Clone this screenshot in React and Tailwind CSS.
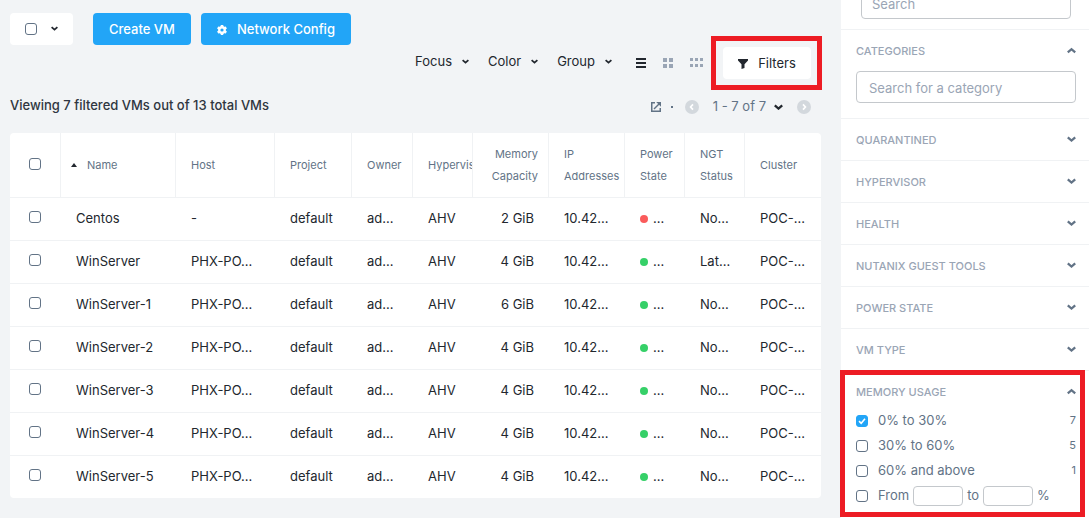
import { useState } from 'react';

const columns = [
  { label: 'Host', width: 'w-[99px]' },
  { label: 'Project', width: 'w-[77px]' },
  { label: 'Owner', width: 'w-[61px]' },
  { label: 'Hypervisor', width: 'w-[60px]' },
  { label: 'Memory Capacity', width: 'w-[76px]', right: true },
  { label: 'IP Addresses', width: 'w-[76px]' },
  { label: 'Power State', width: 'w-[60px]' },
  { label: 'NGT Status', width: 'w-[60px]' },
  { label: 'Cluster', width: 'w-[76px]' },
];

const vms = [
  { name: 'Centos', host: '-', memory: '2 GiB', on: false, ngt: 'No...' },
  { name: 'WinServer', host: 'PHX-PO...', memory: '4 GiB', on: true, ngt: 'Lat...' },
  { name: 'WinServer-1', host: 'PHX-PO...', memory: '6 GiB', on: true, ngt: 'No...' },
  { name: 'WinServer-2', host: 'PHX-PO...', memory: '4 GiB', on: true, ngt: 'No...' },
  { name: 'WinServer-3', host: 'PHX-PO...', memory: '4 GiB', on: true, ngt: 'No...' },
  { name: 'WinServer-4', host: 'PHX-PO...', memory: '4 GiB', on: true, ngt: 'No...' },
  { name: 'WinServer-5', host: 'PHX-PO...', memory: '4 GiB', on: true, ngt: 'No...' },
];

const collapsed = ['Quarantined', 'Hypervisor', 'Health', 'Nutanix Guest Tools', 'Power State', 'VM Type'];

const ranges = [
  { label: '0% to 30%', count: 7 },
  { label: '30% to 60%', count: 5 },
  { label: '60% and above', count: 1 },
];

function Chevron({ up = false, className = 'w-2' }) {
  return (
    <svg viewBox="0 0 8 6" className={`shrink-0 ${className}`} fill="none" stroke="currentColor" strokeWidth="2" aria-hidden="true">
      <path d={up ? 'M0.7 4.8 4 1.9 7.3 4.8' : 'M0.7 1.2 4 4.1 7.3 1.2'} />
    </svg>
  );
}

function Check({ label, id, defaultChecked = false }) {
  return (
    <span className="relative inline-flex size-3 shrink-0">
      <input
        type="checkbox"
        id={id}
        aria-label={label}
        defaultChecked={defaultChecked}
        className="peer size-3 appearance-none rounded-[3px] border border-[#627386] bg-white checked:border-[#22a5f7] checked:bg-[#22a5f7]"
      />
      <svg viewBox="0 0 12 12" className="pointer-events-none absolute inset-0 hidden size-3 peer-checked:block" fill="none" stroke="white" strokeWidth="1.6" aria-hidden="true">
        <path d="M3 6.2 5.2 8.3 9 3.8" />
      </svg>
    </span>
  );
}

function GearIcon() {
  return (
    <svg viewBox="0 0 10 10" className="size-2.5" aria-hidden="true">
      <g fill="currentColor">
        <rect x="3.7" y="0" width="2.6" height="10" rx="0.4" />
        <rect x="3.7" y="0" width="2.6" height="10" rx="0.4" transform="rotate(60 5 5)" />
        <rect x="3.7" y="0" width="2.6" height="10" rx="0.4" transform="rotate(120 5 5)" />
      </g>
      <circle cx="5" cy="5" r="2.8" fill="none" stroke="currentColor" strokeWidth="2.2" />
      <circle cx="5" cy="5" r="1.6" fill="#22a5f7" />
    </svg>
  );
}

function PageArrow({ next = false }) {
  return (
    <button type="button" aria-label={next ? 'Next page' : 'Previous page'} className="size-3.5 rounded-full bg-[#d3d8dd]">
      <svg viewBox="0 0 14 14" className="size-3.5" fill="none" stroke="white" strokeWidth="1.7" aria-hidden="true">
        <path d={next ? 'M6 4.4 8.4 7 6 9.6' : 'M8 4.4 5.6 7 8 9.6'} />
      </svg>
    </button>
  );
}

function Toolbar() {
  return (
    <>
      <div className="flex h-8 items-center gap-2.5">
        <div className="mr-2.5 flex h-8 w-[63px] items-center justify-between rounded bg-white px-[15px]">
          <Check label="Select all VMs" />
          <button type="button" aria-label="Selection options" className="text-[#22272e]">
            <Chevron className="w-[7px]" />
          </button>
        </div>
        <button type="button" className="h-8 rounded bg-[#22a5f7] px-4 pt-0.5 text-[13px] font-medium text-white">Create VM</button>
        <button type="button" className="flex h-8 items-center gap-2.5 rounded bg-[#22a5f7] px-4 pt-0.5 text-[13px] font-medium text-white">
          <GearIcon />
          Network Config
        </button>
      </div>
      <div className="mt-0.5 flex h-8 items-center justify-end">
        <div className="flex items-center gap-[19px] pb-0.5 text-[13px]">
          {['Focus', 'Color', 'Group'].map((name) => (
            <button key={name} type="button" className="flex items-center gap-2.5">
              {name}
              <Chevron className="w-[7px]" />
            </button>
          ))}
        </div>
        <div className="ml-6 flex items-center gap-[17px] text-[#9aa5b5]">
          <button type="button" aria-label="List view" className="text-[#22272e]">
            <svg viewBox="0 0 10 10" className="size-2.5" fill="currentColor" aria-hidden="true">
              <path d="M0 0h10v2H0zM0 4h10v2H0zM0 8h10v2H0z" />
            </svg>
          </button>
          <button type="button" aria-label="Grid view">
            <svg viewBox="0 0 10 10" className="size-2.5" fill="currentColor" aria-hidden="true">
              <path d="M0 0h4v4H0zM6 0h4v4H6zM0 6h4v4H0zM6 6h4v4H6z" />
            </svg>
          </button>
          <button type="button" aria-label="Tile view">
            <svg viewBox="0 0 13 10" className="h-2.5 w-[13px]" fill="currentColor" aria-hidden="true">
              <path d="M0 0h3v3H0zM5 0h3v3H5zM10 0h3v3h-3zM0 6h3v3H0zM5 6h3v3H5zM10 6h3v3h-3z" />
            </svg>
          </button>
        </div>
        <div className="relative mr-2.5 ml-5">
          <button type="button" className="flex h-8 w-[88px] items-center justify-center gap-2.5 rounded bg-white pt-0.5 text-[13px]">
            <svg viewBox="0 0 10 10" className="size-2.5" fill="currentColor" aria-hidden="true">
              <path d="M0 0h10v1.5L6.5 5.2V9L3.5 10V5.2L0 1.5z" />
            </svg>
            Filters
          </button>
          <div className="pointer-events-none absolute -inset-y-[11px] -right-[11px] -left-3 border-5 border-[#ed1c24]" />
        </div>
      </div>
      <div className="flex h-[54px] items-center justify-between">
        <h1 className="text-[13px] font-medium text-[#2f3640]">Viewing 7 filtered VMs out of 13 total VMs</h1>
        <div className="mr-2.5 flex items-center pt-0.5 text-[13px] text-[#627386]">
          <button type="button" aria-label="Export">
            <svg viewBox="0 0 10 10" className="size-2.5" fill="none" stroke="currentColor" strokeWidth="1.5" aria-hidden="true">
              <path d="M4 .75H.75v8.5h8.5V6" />
              <path d="M3 7 8 2" />
              <path d="M5.2 0H10v4.8z" fill="currentColor" stroke="none" />
            </svg>
          </button>
          <span className="ml-2.5 size-0.5 bg-[#627386]" />
          <span className="ml-3 flex"><PageArrow /></span>
          <button type="button" className="mx-3.5 flex items-center gap-2">
            1 - 7 of 7
            <Chevron className="w-[9px] text-[#22272e]" />
          </button>
          <span className="flex"><PageArrow next /></span>
        </div>
      </div>
    </>
  );
}

function VmTable() {
  const line = 'border-[#f0f2f4]';
  return (
    <table className="w-full table-fixed border-separate border-spacing-0 overflow-hidden rounded bg-white text-left">
      <thead className="text-[11px] leading-[22px] text-[#627386]">
        <tr className="h-[65px]">
          <th className={`w-[51px] border-r border-b pb-0.5 pl-[19px] font-normal ${line}`}>
            <span className="flex"><Check label="Select all rows" /></span>
          </th>
          <th className={`w-[115px] border-r border-b pl-2.5 font-normal ${line}`}>
            <span className="flex items-center gap-2.5">
              <svg viewBox="0 0 6 4" className="w-1.5 text-[#22272e]" fill="currentColor" aria-hidden="true">
                <path d="M3 0 6 4H0z" />
              </svg>
              Name
            </span>
          </th>
          {columns.map((c) => (
            <th
              key={c.label}
              className={`overflow-hidden border-r border-b font-normal last:border-r-0 ${line} ${c.width} ${c.right ? 'pr-2.5 text-right' : 'pl-[15px]'}`}
            >
              {c.label}
            </th>
          ))}
        </tr>
      </thead>
      <tbody className="text-[13px] whitespace-nowrap *:*:border-b *:*:border-[#f0f2f4] last:*:last:*:border-b-0">
        {vms.map((vm) => (
          <tr key={vm.name} className="h-[43px] last:h-[42px]">
            <td className="pb-1 pl-[19px]">
              <span className="flex"><Check label={`Select ${vm.name}`} /></span>
            </td>
            <td className="pl-[15px]">{vm.name}</td>
            <td className="pl-[15px]">{vm.host}</td>
            <td className="pl-[15px]">default</td>
            <td className="pl-[15px]">ad...</td>
            <td className="pl-[15px]">AHV</td>
            <td className="pr-[15px] text-right">{vm.memory}</td>
            <td className="pl-[15px]">10.42...</td>
            <td className="pl-[15px]">
              <span className="flex items-center gap-[5px]">
                <span className={`size-2 rounded-full ${vm.on ? 'bg-[#36d068]' : 'bg-[#fa5b5b]'}`} />
                ...
              </span>
            </td>
            <td className="pl-[15px]">{vm.ngt}</td>
            <td className="pl-[15px]">POC-...</td>
          </tr>
        ))}
      </tbody>
    </table>
  );
}

function SectionHeader({ title, open, onClick }) {
  return (
    <button type="button" aria-expanded={open} onClick={onClick} className="flex h-[41px] w-full items-center justify-between text-[11px] font-medium text-[#9aa5b5] uppercase">
      <span className="pt-0.5">{title}</span>
      <Chevron up={open} className="w-[9px] text-[#627386]" />
    </button>
  );
}

function FilterPanel() {
  const [categoriesOpen, setCategoriesOpen] = useState(true);
  const [memoryOpen, setMemoryOpen] = useState(true);
  return (
    <aside className="w-[248px] shrink-0 bg-white text-[13px] text-[#627386]">
      <div className="border-b border-[#f0f2f4] pr-[18px] pb-2.5 pl-5">
        <input type="text" aria-label="Search labels" placeholder="Search" className="-mt-[13px] block h-8 w-full rounded border border-[#c4c8cc] px-2.5 pt-0.5 placeholder:text-[#9aa5b5]" />
      </div>
      <section className="border-b border-[#f0f2f4] pr-[13px] pl-[15px]">
        <SectionHeader title="Categories" open={categoriesOpen} onClick={() => setCategoriesOpen(!categoriesOpen)} />
        {categoriesOpen && (
          <div className="pb-[15px]">
            <input type="text" aria-label="Search for a category" placeholder="Search for a category" className="block h-8 w-full rounded border border-[#c4c8cc] px-3 pt-0.5 placeholder:text-[#9aa5b5]" />
          </div>
        )}
      </section>
      {collapsed.map((title) => (
        <section key={title} className="border-b border-[#f0f2f4] pr-[13px] pl-[15px]">
          <SectionHeader title={title} open={false} />
        </section>
      ))}
      <section className="relative pr-[13px] pb-[9px] pl-[15px]">
        <SectionHeader title="Memory Usage" open={memoryOpen} onClick={() => setMemoryOpen(!memoryOpen)} />
        {memoryOpen && (
          <ul className="-mt-1">
            {ranges.map((r, i) => (
              <li key={r.label} className="flex h-[25px] items-center gap-2.5">
                <Check id={`memory-${i}`} label={r.label} defaultChecked={i === 0} />
                <label htmlFor={`memory-${i}`}>{r.label}</label>
                <span className="ml-auto text-[11px]">{r.count}</span>
              </li>
            ))}
            <li className="flex h-[25px] items-center">
              <Check id="memory-custom" label="Custom range" />
              <label htmlFor="memory-custom" className="ml-2.5">From</label>
              <input type="text" aria-label="Minimum percent" className="mx-1 h-5 w-[50px] rounded border border-[#c4c8cc] px-1" />
              to
              <input type="text" aria-label="Maximum percent" className="mx-1 h-5 w-[50px] rounded border border-[#c4c8cc] px-1" />
              %
            </li>
          </ul>
        )}
        <div className="pointer-events-none absolute -top-px right-1 bottom-0 -left-px border-5 border-[#ed1c24]" />
      </section>
    </aside>
  );
}

export default function App() {
  return (
    <div className="flex min-h-screen overflow-hidden bg-[#f2f4f6] font-['Inter','Lato',sans-serif] text-[#22272e]">
      <main className="min-w-0 flex-1 pt-[13px] pr-5 pb-5 pl-2.5">
        <Toolbar />
        <VmTable />
      </main>
      <FilterPanel />
    </div>
  );
}
